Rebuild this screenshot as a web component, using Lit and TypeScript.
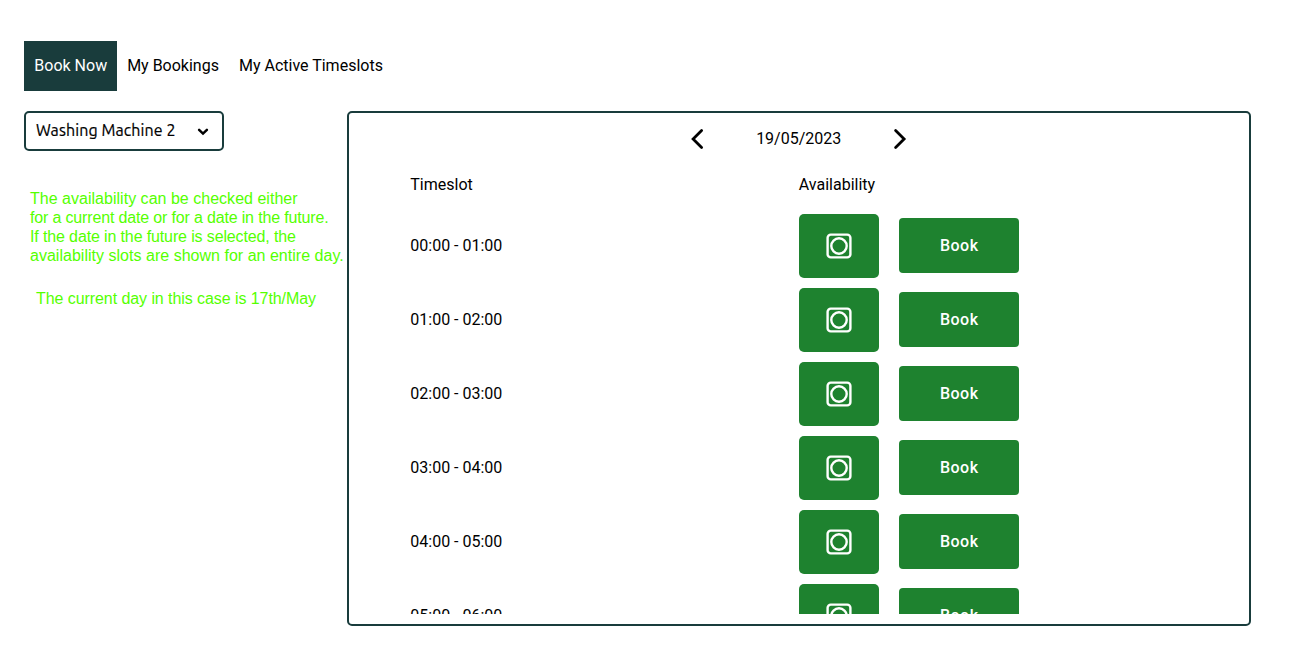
import { LitElement, html, css } from "lit";
import { customElement, state } from "lit/decorators.js";

const pad = (n: number) => String(n).padStart(2, "0");

@customElement("app-root")
export class AppRoot extends LitElement {
  static styles = css`
    :host {
      display: block;
      box-sizing: border-box;
      height: 663px;
      padding: 41px 24px 0;
      overflow: hidden;
      background: #fff;
      color: #000;
      font: 16px/19px Roboto, sans-serif;
    }
    * { box-sizing: border-box; }
    button { font: inherit; color: inherit; border: 0; background: none; padding: 0; cursor: pointer; }
    .tabs { display: flex; height: 50px; margin-bottom: 20px; }
    .tab { padding: 0 9.7px 2px 10.3px; white-space: nowrap; }
    .tab.active { background: #193c3c; color: #fff; }
    .main { display: flex; }
    .side { width: 323px; flex: none; }
    .select {
      display: flex;
      align-items: center;
      justify-content: space-between;
      width: 200px;
      height: 40px;
      padding: 0 13px 2px 10px;
      border: 2px solid #193c3c;
      border-radius: 5px;
      font-family: Ubuntu, "Noto Sans", sans-serif;
    }
    .value { white-space: nowrap; letter-spacing: 0.1px; -webkit-text-stroke: 0.2px #000; }
    .select svg { margin-top: 3px; }
    .note {
      margin: 38px 0 0 6px;
      color: #55ff00;
      font-family: "Liberation Sans", Arial, sans-serif;
      white-space: nowrap;
    }
    .note.today { margin: 24px 0 0 12px; letter-spacing: -0.07px; }
    .wide { letter-spacing: 0.02px; }
    .tight { letter-spacing: -0.16px; }
    .tight.soft { letter-spacing: -0.13px; }
    .panel {
      display: flex;
      flex-direction: column;
      width: 904px;
      height: 515px;
      padding: 10px;
      border: 2px solid #193c3c;
      border-radius: 5px;
    }
    .date {
      display: flex;
      justify-content: center;
      align-items: center;
      gap: 49px;
      height: 32px;
      padding-right: 0.6px;
      flex: none;
    }
    .date span { padding-bottom: 2px; }
    .arrow { display: flex; width: 18px; }
    .row {
      display: grid;
      grid-template-columns: 388.5px auto;
      align-items: center;
      padding-left: 51.3px;
      flex: none;
    }
    .head { height: 59px; }
    .slots { flex: 1; min-height: 0; overflow: hidden; }
    .slot { grid-template-columns: 388.7px auto; height: 64px; margin-bottom: 10px; }
    .time { padding-bottom: 2px; }
    .actions { display: flex; align-items: center; gap: 20px; }
    .status {
      display: flex;
      align-items: center;
      justify-content: center;
      width: 80px;
      height: 64px;
      border-radius: 5px;
      background: #1e822f;
    }
    .book {
      width: 120px;
      height: 55px;
      margin-top: -1px;
      padding-left: 0.4px;
      border-radius: 4px;
      background: #1e822f;
      color: #fff;
      font-weight: 500;
      letter-spacing: 0.5px;
    }
  `;

  @state() private tab = 0;

  private tabs = ["Book Now", "My Bookings", "My Active Timeslots"];

  private slotRow(h: number) {
    return html`<div class="row slot">
      <span class="time">${pad(h)}:00 - ${pad(h + 1)}:00</span>
      <div class="actions">
        <div class="status">
          <svg width="28" height="28" viewBox="0 0 28 28" fill="none" stroke="#fff" stroke-width="2.4">
            <rect x="2.6" y="2.6" width="22.8" height="22.8" rx="3.2" />
            <circle cx="14" cy="14" r="7.7" />
          </svg>
        </div>
        <button class="book">Book</button>
      </div>
    </div>`;
  }

  render() {
    return html`
      <nav class="tabs">
        ${this.tabs.map(
          (t, i) => html`<button class="tab ${i === this.tab ? "active" : ""}" @click=${() => (this.tab = i)}>${t}</button>`
        )}
      </nav>
      <div class="main">
        <div class="side">
          <div class="select">
            <span class="value">Washing Machine 2</span>
            <svg width="12" height="8" viewBox="0 0 12 8" fill="none" stroke="#000" stroke-width="2.5" stroke-linecap="round">
              <path d="M2.1 1.8 6 5.6 9.9 1.8" />
            </svg>
          </div>
          <div class="note">
            <div class="wide">The availability can be checked either</div>
            <div class="tight">for a current date or for a date in the future.</div>
            <div class="tight soft">If the date in the future is selected, the</div>
            <div class="wide">availability slots are shown for an entire day.</div>
          </div>
          <div class="note today">The current day in this case is 17th/May</div>
        </div>
        <section class="panel">
          <div class="date">
            <button class="arrow" aria-label="Previous day">
              <svg width="18" height="22" viewBox="0 0 18 22" fill="none" stroke="#000" stroke-width="2.8" stroke-linecap="round">
                <path d="M12.6 2.5 4.1 11 12.6 19.5" />
              </svg>
            </button>
            <span>19/05/2023</span>
            <button class="arrow" aria-label="Next day">
              <svg width="18" height="22" viewBox="0 0 18 22" fill="none" stroke="#000" stroke-width="2.8" stroke-linecap="round">
                <path d="M5.6 2.5 14.1 11 5.6 19.5" />
              </svg>
            </button>
          </div>
          <div class="row head"><span>Timeslot</span><span>Availability</span></div>
          <div class="slots">${[0, 1, 2, 3, 4, 5].map((h) => this.slotRow(h))}</div>
        </section>
      </div>
    `;
  }
}
